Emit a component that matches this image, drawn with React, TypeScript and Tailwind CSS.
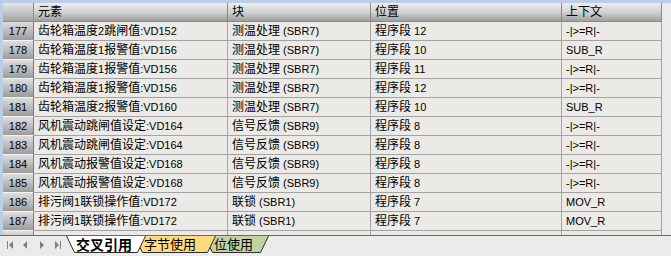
import React from 'react'

type Row = [string, string, string, string, string]

const rows: Row[] = [
  ['177', '齿轮箱温度2跳闸值:VD152', '测温处理 (SBR7)', '程序段 12', '-|>=R|-'],
  ['178', '齿轮箱温度1报警值:VD156', '测温处理 (SBR7)', '程序段 10', 'SUB_R'],
  ['179', '齿轮箱温度1报警值:VD156', '测温处理 (SBR7)', '程序段 11', '-|>=R|-'],
  ['180', '齿轮箱温度1报警值:VD156', '测温处理 (SBR7)', '程序段 12', '-|>=R|-'],
  ['181', '齿轮箱温度2报警值:VD160', '测温处理 (SBR7)', '程序段 10', 'SUB_R'],
  ['182', '风机震动跳闸值设定:VD164', '信号反馈 (SBR9)', '程序段 8', '-|>=R|-'],
  ['183', '风机震动跳闸值设定:VD164', '信号反馈 (SBR9)', '程序段 8', '-|>=R|-'],
  ['184', '风机震动报警值设定:VD168', '信号反馈 (SBR9)', '程序段 8', '-|>=R|-'],
  ['185', '风机震动报警值设定:VD168', '信号反馈 (SBR9)', '程序段 8', '-|>=R|-'],
  ['186', '排污阀1联锁操作值:VD172', '联锁 (SBR1)', '程序段 7', 'MOV_R'],
  ['187', '排污阀1联锁操作值:VD172', '联锁 (SBR1)', '程序段 7', 'MOV_R'],
  ['188', '', '', '', ''],
]

const widths = ['w-[194px]', 'w-[143px]', 'w-[191px]', 'w-[100px]']
const headers = ['元素', '块', '位置', '上下文']

// the grid font draws latin a bit smaller than the hanzi, so split the runs
const Mixed = ({ text }: { text: string }) => (
  <>
    {text.split(/([\u3400-\u9fff]+)/).map((s, i) =>
      i % 2 ? (
        <span key={i} className="text-[12px]">
          {s}
        </span>
      ) : (
        s
      ),
    )}
  </>
)

const HeaderRow = () => (
  <div className="flex h-[19px]">
    <div className="w-[31px] h-full border-r border-b border-[#8a8a8a] bg-linear-to-b from-[#e6e6e6] to-[#a6a6a6]" />
    {headers.map((h, i) => (
      <div
        key={h}
        className={`${widths[i]} h-full border-r border-b border-[#8a8a8a] bg-linear-to-b from-[#eeeeee] via-[#d2d2d2] to-[#a0a0a0] pl-[4px] text-[12px] leading-[19px]`}
      >
        {h}
      </div>
    ))}
  </div>
)

const DataRow = ({ row }: { row: Row }) => (
  <div className="flex h-[19px]">
    <div className="w-[31px] h-full border-r border-r-[#7a7a7a] border-b border-b-[#f2f2f2] bg-linear-to-b from-[#dedede] to-[#9c9c9c] text-center text-[11px] leading-[18px]">
      {row[1] ? row[0] : ''}
    </div>
    {row.slice(1).map((c, i) => (
      <div
        key={i}
        className={`${widths[i]} h-full border-r border-b border-[#a3a3a3] bg-[#ebeae6] pl-[4px] text-[11px] leading-[18px] whitespace-nowrap overflow-hidden`}
      >
        <Mixed text={c} />
      </div>
    ))}
  </div>
)

const NavIcon = ({ kind }: { kind: 'first' | 'prev' | 'next' | 'last' }) => {
  const w = kind === 'first' || kind === 'last' ? 6 : 4
  return (
    <svg width={w} height="8" viewBox={`0 0 ${w} 8`} className="block">
      {kind === 'first' && (
        <>
          <rect x="0" y="0" width="1" height="8" fill="#808080" />
          <polygon points="6,0 2,4 6,8" fill="#808080" />
        </>
      )}
      {kind === 'prev' && <polygon points="4,0 0,4 4,8" fill="#808080" />}
      {kind === 'next' && <polygon points="0,0 4,4 0,8" fill="#808080" />}
      {kind === 'last' && (
        <>
          <polygon points="0,0 4,4 0,8" fill="#808080" />
          <rect x="5" y="0" width="1" height="8" fill="#808080" />
        </>
      )}
    </svg>
  )
}

type TabProps = {
  label: string
  width: number
  fill: string
  className?: string
  textClass?: string
}

const Tab = ({ label, width, fill, className, textClass }: TabProps) => (
  <div className={`relative h-[17px] flex items-center pl-[10px] ${className ?? ''}`} style={{ width }}>
    <svg width={width} height="17" className="absolute inset-0">
      <polygon points={`0,0 8.5,16 ${width - 8.5},16 ${width},0`} fill={fill} />
      <polyline
        points={`0.5,0 8.5,16.5 ${width - 8.5},16.5 ${width - 0.5},0`}
        fill="none"
        stroke="#2e2e2e"
        strokeWidth="1"
      />
    </svg>
    <span className={`relative text-black leading-none ${textClass ?? ''}`}>{label}</span>
  </div>
)

export default function App() {
  return (
    <div className="w-[671px] h-[256px] overflow-hidden bg-[#ebebeb] flex flex-col font-['Liberation_Sans','Noto_Sans_CJK_SC',sans-serif] text-black">
      <div className="h-[235px] shrink-0 overflow-hidden border-t-[3px] border-l-[3px] border-[#bccde6]">
        <HeaderRow />
        {rows.map((r) => (
          <DataRow key={r[0]} row={r} />
        ))}
      </div>
      <div className="flex-1 flex items-start border-t border-[#6a6a6a]">
        <div className="flex items-center h-[17px] pt-[1px]">
          <div className="ml-[7px]">
            <NavIcon kind="first" />
          </div>
          <div className="ml-[10px]">
            <NavIcon kind="prev" />
          </div>
          <div className="ml-[13px]">
            <NavIcon kind="next" />
          </div>
          <div className="ml-[11px]">
            <NavIcon kind="last" />
          </div>
        </div>
        <div className="flex ml-[5px]">
          <Tab label="交叉引用" width={80} fill="#ffffff" className="z-30" textClass="text-[14px] font-bold" />
          <Tab label="字节使用" width={82} fill="#ffd97c" className="z-20 -ml-[12px]" textClass="text-[13px]" />
          <Tab label="位使用" width={65} fill="#c2d2a0" className="z-10 -ml-[12px]" textClass="text-[13px]" />
        </div>
      </div>
    </div>
  )
}
